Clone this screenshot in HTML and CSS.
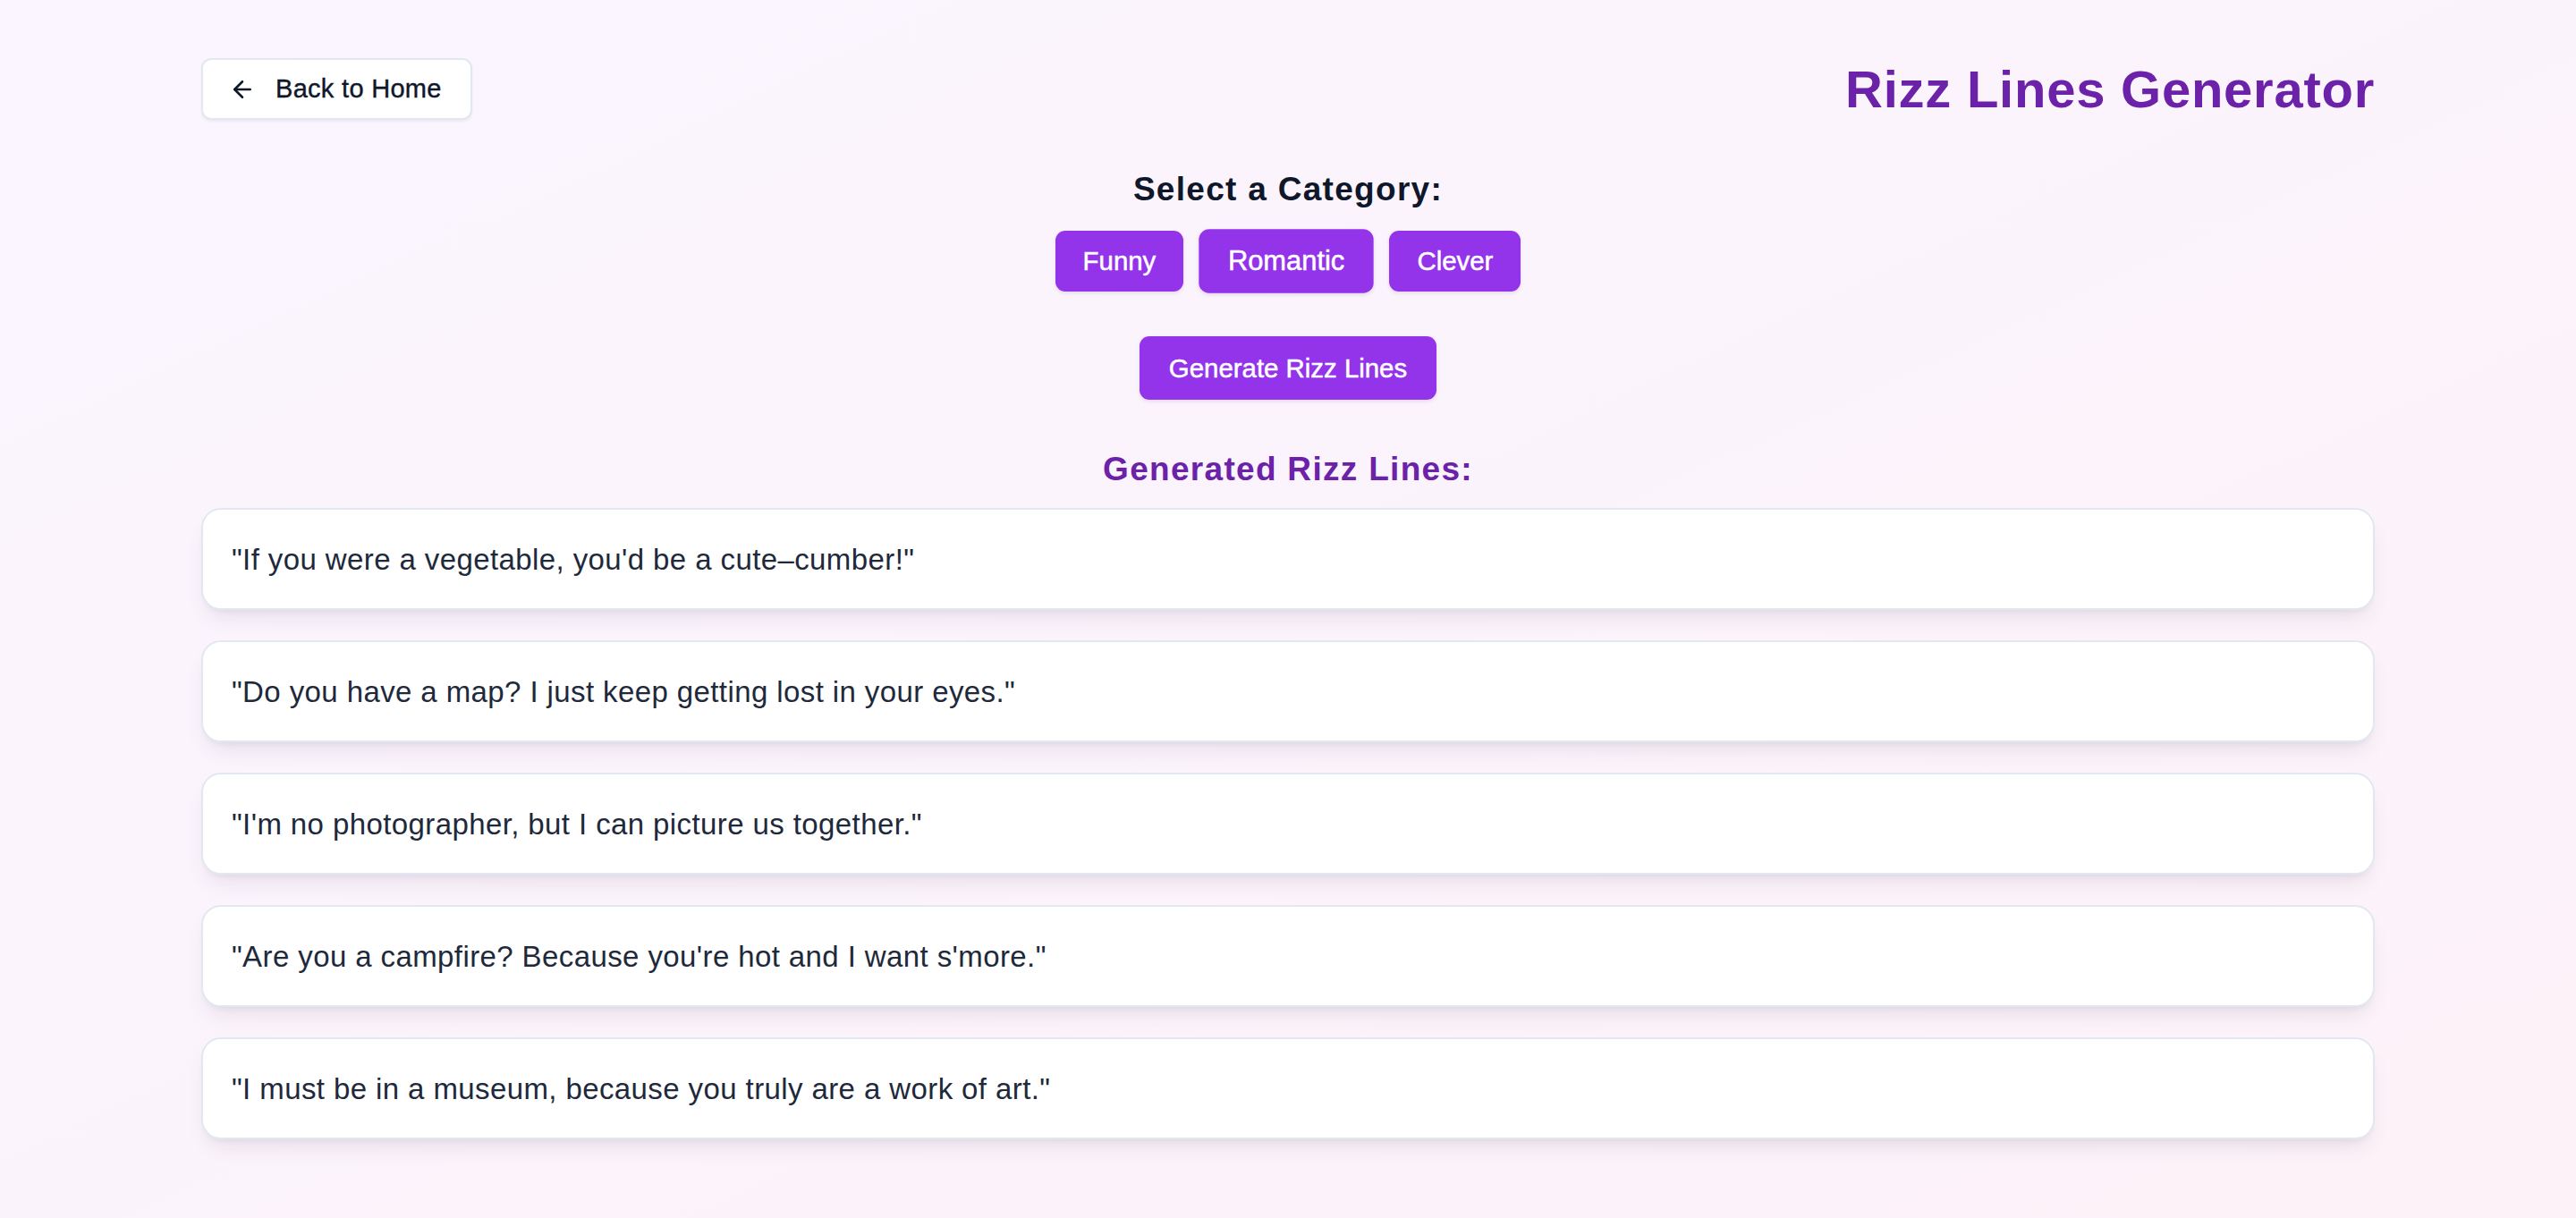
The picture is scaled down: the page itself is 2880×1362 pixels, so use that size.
FILE: index.html
```html
<!DOCTYPE html>
<html>
  <head>
    <meta charset="utf-8" />
    <title>Rizz Lines Generator</title>
    <link rel="stylesheet" href="styles.css">
  </head>
  <body>
    <div class="page">
      <header class="header">
        <button type="button" class="back-btn">
          <svg class="back-icon" viewBox="0 0 24 24" fill="none" stroke="currentColor" stroke-width="2" stroke-linecap="round" stroke-linejoin="round">
            <path d="m12 19-7-7 7-7" />
            <path d="M19 12H5" />
          </svg>
          <span>Back to Home</span>
        </button>
        <h1 class="title">Rizz Lines Generator</h1>
      </header>

      <section class="category">
        <h2 class="category-title">Select a Category:</h2>
        <div class="category-list">
          <button type="button" class="btn">Funny</button>
          <button type="button" class="btn btn-active">Romantic</button>
          <button type="button" class="btn">Clever</button>
        </div>
        <button type="button" class="btn btn-generate">Generate Rizz Lines</button>
      </section>

      <section class="results">
        <h2 class="results-title">Generated Rizz Lines:</h2>
        <ul class="line-list">
          <li class="line-card">"If you were a vegetable, you'd be a cute–cumber!"</li>
          <li class="line-card">"Do you have a map? I just keep getting lost in your eyes."</li>
          <li class="line-card">"I'm no photographer, but I can picture us together."</li>
          <li class="line-card">"Are you a campfire? Because you're hot and I want s'more."</li>
          <li class="line-card">"I must be in a museum, because you truly are a work of art."</li>
        </ul>
      </section>
    </div>
  </body>
</html>
```

FILE: styles.css
```css
/* Page background */
body {
  margin: 0;
  min-height: 100vh;
  background: linear-gradient(to bottom right, #faf5ff, #fdf2f8);
  font-family: "Liberation Sans", Arial, sans-serif;
  color: #0f172a;
}

.page {
  width: 2430px;
  margin: 0 auto;
  padding-top: 65px;
  padding-bottom: 60px;
}

/* Header row */
.header {
  display: flex;
  justify-content: space-between;
  align-items: center;
  height: 69px;
}

.back-btn {
  display: inline-flex;
  align-items: center;
  gap: 22px;
  height: 69px;
  box-sizing: border-box;
  padding: 0 32px 0 29px;
  background-color: #fff;
  border: 2px solid #e2e8f0;
  border-radius: 11px;
  box-shadow: 0 2px 3px rgba(15, 23, 42, 0.05);
  font-family: inherit;
  font-size: 29px;
  letter-spacing: 0.3px;
  -webkit-text-stroke: 0.4px currentColor;
  color: #0f172a;
  cursor: pointer;
}

.back-icon {
  width: 30px;
  height: 30px;
}

.title {
  margin: 0;
  font-size: 58px;
  line-height: 69px;
  font-weight: bold;
  letter-spacing: 0.75px;
  color: #6b21a8;
}

/* Category picker */
.category {
  display: flex;
  flex-direction: column;
  align-items: center;
  margin-top: 52px;
}

.category-title,
.results-title {
  margin: 0;
  font-size: 37px;
  line-height: 51px;
  font-weight: bold;
  letter-spacing: 1.3px;
  text-align: center;
}

.category-title {
  color: #0f172a;
}

.category-list {
  display: flex;
  gap: 22px;
  margin-top: 21px;
}

.btn {
  height: 68px;
  padding: 0 31px;
  background-color: #9333ea;
  color: #fff;
  border: none;
  border-radius: 11px;
  box-shadow: 0 2px 4px rgba(76, 29, 149, 0.12);
  font-family: inherit;
  font-size: 29.4px;
  -webkit-text-stroke: 0.5px currentColor;
  cursor: pointer;
}

.btn:hover {
  background-color: #7e22ce;
}

.btn-active {
  transform: scale(1.05);
}

.btn-generate {
  height: 71px;
  padding: 0 33px;
  margin-top: 50px;
}

/* Results */
.results {
  margin-top: 52px;
}

.results-title {
  color: #6b21a8;
}

.line-list {
  list-style: none;
  margin: 18px 0 0;
  padding: 0;
  display: flex;
  flex-direction: column;
  gap: 34px;
}

.line-card {
  background-color: #fff;
  border: 2px solid #e2e8f0;
  border-radius: 22px;
  padding: 29.5px 32px;
  font-size: 33px;
  line-height: 51px;
  letter-spacing: 0.4px;
  color: #1e293b;
  box-shadow: 0 14px 26px -8px rgba(30, 20, 60, 0.1), 0 5px 9px -5px rgba(30, 20, 60, 0.08);
}
```
